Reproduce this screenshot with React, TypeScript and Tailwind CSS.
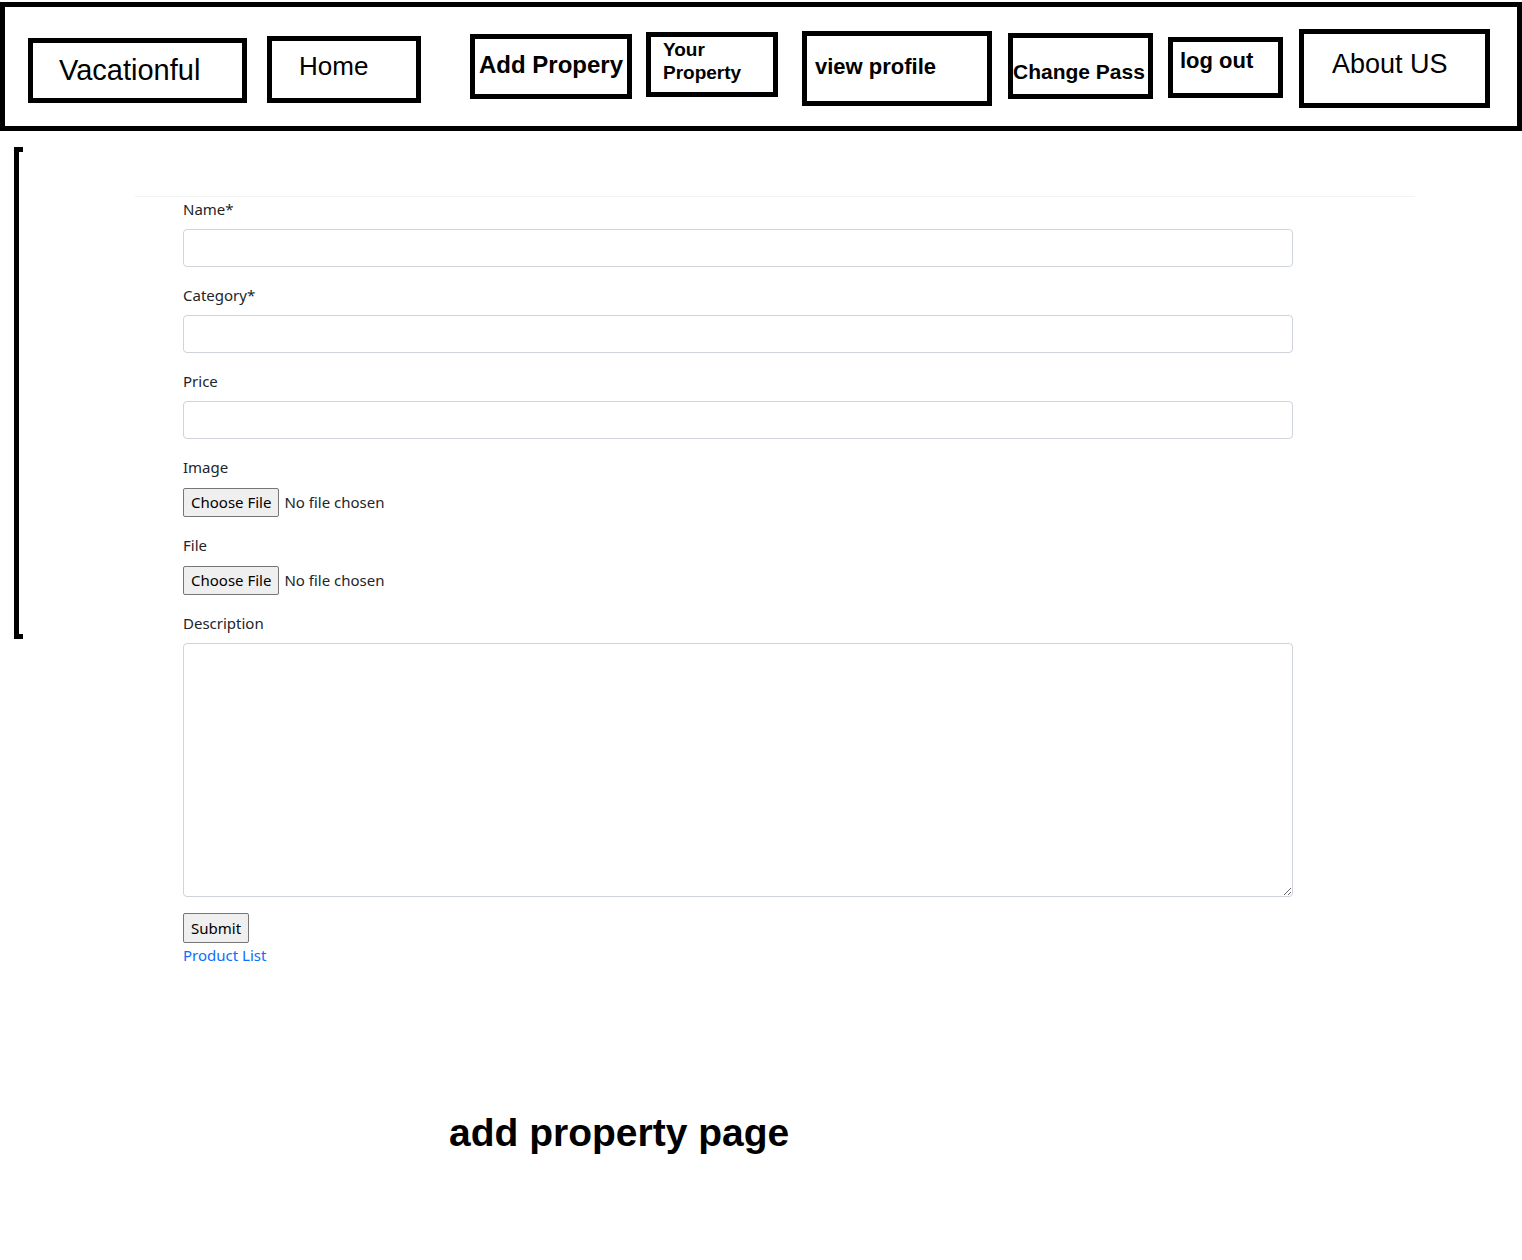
const navFont = { fontFamily: '"Liberation Sans", Arial, sans-serif' };

const NavBar = () => {
  return (
    <header
      className="mt-[2px] flex h-[129px] w-full items-start border-[5px] border-black bg-white text-black"
      style={navFont}
    >
      <div className="ml-[23px] mt-[31px] flex h-[65px] w-[219px] items-center border-[5px] border-black pl-[26px] text-[29px] leading-none">
        Vacationful
      </div>
      <div className="ml-[20px] mt-[29px] flex h-[67px] w-[154px] items-center border-[5px] border-black pb-[7px] pl-[27px] text-[26px] leading-none">
        Home
      </div>
      <div className="ml-[49px] mt-[27px] flex h-[65px] w-[162px] items-center border-[5px] border-black pb-[3px] pl-[4px] text-[24px] font-bold leading-none whitespace-nowrap">
        Add Propery
      </div>
      <div className="ml-[14px] mt-[25px] h-[65px] w-[132px] border-[5px] border-black pl-[12px] pt-[1px] text-[19px] font-bold leading-[23px]">
        Your
        <br />
        Property
      </div>
      <div className="ml-[24px] mt-[24px] flex h-[75px] w-[190px] items-center border-[5px] border-black pb-[4px] pl-[8px] text-[22px] font-bold leading-none whitespace-nowrap">
        view profile
      </div>
      <div className="ml-[16px] mt-[26px] flex h-[66px] w-[145px] items-center border-[5px] border-black pt-[10px] text-[21px] font-bold leading-none whitespace-nowrap">
        Change Pass
      </div>
      <div className="ml-[15px] mt-[30px] flex h-[61px] w-[115px] items-center border-[5px] border-black pb-[13px] pl-[7px] text-[22px] font-bold leading-none whitespace-nowrap">
        log out
      </div>
      <div className="ml-[16px] mt-[22px] flex h-[79px] w-[191px] items-center border-[5px] border-black pb-[8px] pl-[28px] text-[27px] leading-none whitespace-nowrap">
        About US
      </div>
    </header>
  );
};

const Field = ({ label, children }: { label: string; children: React.ReactNode }) => (
  <div className="mb-4">
    <label className="mb-2 block text-[15px] leading-6 text-[#212529]">{label}</label>
    {children}
  </div>
);

const FilePicker = () => (
  <div className="flex h-[30px] items-center text-[15px] text-[#212529]">
    <span className="flex h-[29px] items-center rounded-[2px] border border-[#767676] bg-[#efefef] px-[7px] text-black">
      Choose File
    </span>
    <span className="ml-[5px]">No file chosen</span>
  </div>
);

const AddPropertyForm = () => {
  return (
    <form className="w-[1110px] pl-0" onSubmit={(e) => e.preventDefault()}>
      <Field label="Name*">
        <input className="block h-[38px] w-full rounded-[4px] border border-[#ced4da] bg-white px-3 outline-none" />
      </Field>
      <Field label="Category*">
        <input className="block h-[38px] w-full rounded-[4px] border border-[#ced4da] bg-white px-3 outline-none" />
      </Field>
      <Field label="Price">
        <input className="block h-[38px] w-full rounded-[4px] border border-[#ced4da] bg-white px-3 outline-none" />
      </Field>
      <Field label="Image">
        <FilePicker />
      </Field>
      <Field label="File">
        <FilePicker />
      </Field>
      <Field label="Description">
        <textarea className="block h-[254px] w-full rounded-[4px] border border-[#ced4da] bg-white px-3 py-2 outline-none" />
      </Field>
      <button
        type="submit"
        className="flex h-[30px] items-center rounded-[2px] border border-[#767676] bg-[#efefef] px-[7px] text-[15px] text-black"
      >
        Submit
      </button>
      <a href="#" className="block text-[15px] leading-6 text-[#0d6efd]">
        Product List
      </a>
    </form>
  );
};

export default function App() {
  return (
    <div
      className="min-h-[1260px] w-[1522px] bg-white"
      style={{ fontFamily: '"Noto Sans", "Open Sans", sans-serif' }}
    >
      <NavBar />
      <div className="flex items-start">
        <div className="ml-[14px] mt-[16px] h-[492px] w-[9px] shrink-0 border-y-[5px] border-l-[5px] border-black" />
        <div className="ml-[112px] mt-[65px] w-[1280px]">
          <div className="h-px w-full bg-[#f3f3f3]" />
          <div className="pl-[48px]">
            <AddPropertyForm />
          </div>
        </div>
      </div>
      <h1
        className="ml-[449px] mt-[146px] text-[39px] font-bold leading-none text-black"
        style={navFont}
      >
        add property page
      </h1>
    </div>
  );
}
